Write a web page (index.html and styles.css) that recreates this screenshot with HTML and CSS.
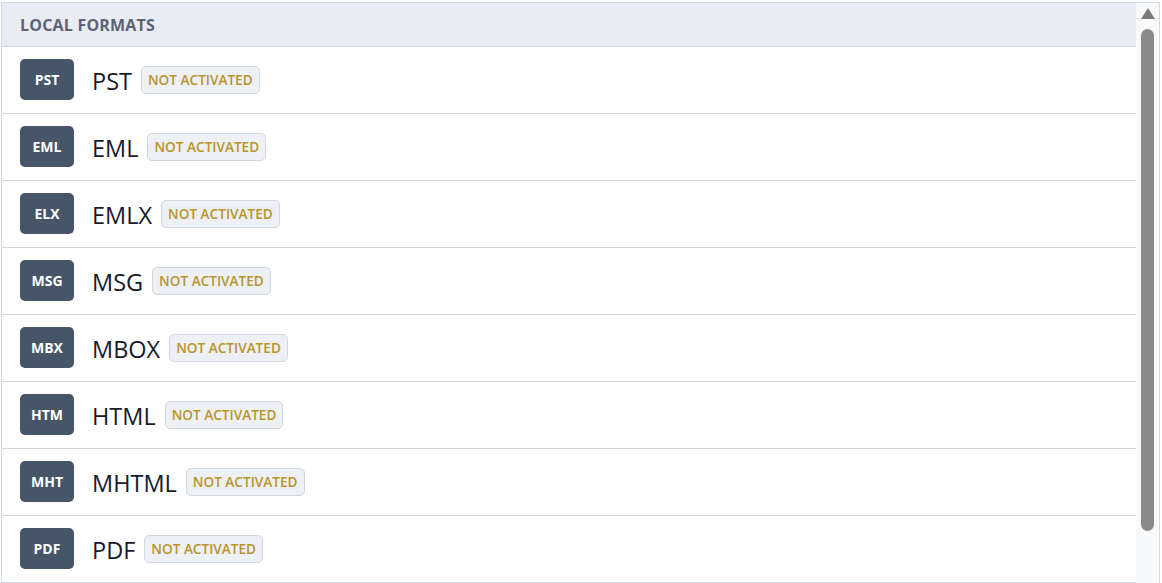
FILE: index.html
```html
<!DOCTYPE html>
<html>
<head>
<meta charset="utf-8">
<link rel="stylesheet" href="styles.css">
</head>
<body>
<div class="panel">
  <div class="scroll-area">
    <div class="header">LOCAL FORMATS</div>
    <div class="row"><span class="badge">PST</span><span class="name">PST</span><span class="pill">NOT ACTIVATED</span></div>
    <div class="row"><span class="badge">EML</span><span class="name">EML</span><span class="pill">NOT ACTIVATED</span></div>
    <div class="row"><span class="badge">ELX</span><span class="name">EMLX</span><span class="pill">NOT ACTIVATED</span></div>
    <div class="row"><span class="badge">MSG</span><span class="name">MSG</span><span class="pill">NOT ACTIVATED</span></div>
    <div class="row"><span class="badge">MBX</span><span class="name">MBOX</span><span class="pill">NOT ACTIVATED</span></div>
    <div class="row"><span class="badge">HTM</span><span class="name">HTML</span><span class="pill">NOT ACTIVATED</span></div>
    <div class="row"><span class="badge">MHT</span><span class="name">MHTML</span><span class="pill">NOT ACTIVATED</span></div>
    <div class="row"><span class="badge">PDF</span><span class="name">PDF</span><span class="pill">NOT ACTIVATED</span></div>
  </div>
  <div class="scrollbar">
    <div class="arrow"></div>
    <div class="thumb"></div>
  </div>
</div>
</body>
</html>
```
FILE: styles.css
```css
html, body {
  margin: 0;
  padding: 0;
  height: 583px;
  overflow: hidden;
  background: #ffffff;
  font-family: "Open Sans", "Noto Sans", sans-serif;
}
.panel {
  margin: 2px 2px 0 1px;
  border: 1px solid #d5d9e0;
  display: flex;
  height: 590px;
  background: #fff;
}
.scroll-area {
  flex: 1;
  min-width: 0;
}
.header {
  height: 43px;
  background: #e9edf3;
  border-bottom: 1px solid #d3d7de;
  display: flex;
  align-items: center;
  padding-left: 18px;
  font-size: 16px;
  font-weight: 700;
  color: #5c6373;
  letter-spacing: 0.2px;
}
.row {
  height: 65px;
  padding-bottom: 1px;
  border-bottom: 1px solid #d3d7de;
  display: flex;
  align-items: center;
  padding-left: 18px;
}
.badge {
  width: 54px;
  height: 41px;
  border-radius: 5px;
  background: #475569;
  color: #ffffff;
  font-size: 14px;
  font-weight: 700;
  display: flex;
  align-items: center;
  justify-content: center;
  margin-right: 18px;
}
.name {
  font-size: 23.5px;
  color: #151b2b;
  margin-right: 9px;
  margin-top: 2px;
}
.pill {
  height: 26px;
  padding: 0 6px;
  border: 1px solid #d3d7de;
  border-radius: 5px;
  background: #edf0f4;
  color: #b8952a;
  font-size: 13.6px;
  font-weight: 600;
  display: flex;
  align-items: center;
}
.scrollbar {
  width: 23px;
  background: #f8f9fa;
  display: flex;
  flex-direction: column;
  align-items: center;
  padding-top: 5px;
}
.arrow {
  width: 0;
  height: 0;
  border-left: 7px solid transparent;
  border-right: 7px solid transparent;
  border-bottom: 11px solid #7a7a7a;
  margin-bottom: 10px;
}
.thumb {
  width: 13px;
  height: 502px;
  background: #8a8a8a;
  border-radius: 7px;
}
```
